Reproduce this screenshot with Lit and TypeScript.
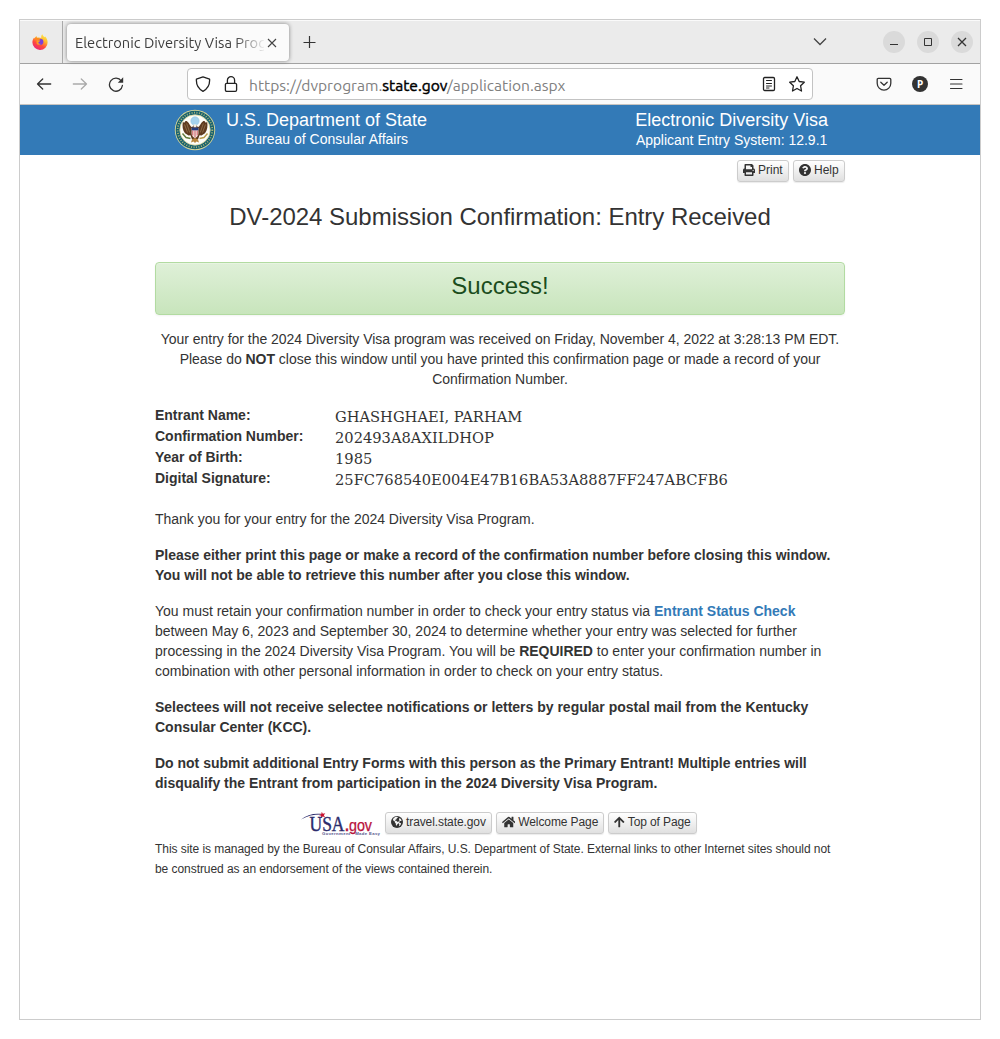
import { LitElement, html, css, svg } from "lit";
import { customElement } from "lit/decorators.js";

const firefox = html`<svg width="16" height="16" viewBox="0 0 16 16">
  <defs>
    <linearGradient id="fx" x1="0.8" y1="0" x2="0.25" y2="1">
      <stop offset="0" stop-color="#fff04a" /><stop offset=".35" stop-color="#ffb32c" />
      <stop offset=".65" stop-color="#ff4a3d" /><stop offset="1" stop-color="#e8207e" />
    </linearGradient>
  </defs>
  <path fill="url(#fx)" d="M10.4.3c.3 1.5 1.4 2.2 2.2 3 .3-.2.3-.7.3-1 1.700 1.500 2.700 3.700 2.700 6a7.600 7.600 0 0 1-15.200.2c0-2.200.7-3.700 1.800-5 .1.400.2.700.4.900C3 3.400 3.800 2.500 4.700 2c-.1.700.1 1.300.4 1.700 1.500-.5 3.200-.2 4.200.4-.3-1.400.1-2.900 1.100-3.800z" />
  <circle cx="8.300" cy="7.800" r="3.100" fill="#7a3fdb" />
  <path fill="#ff8a1f" d="M2.600 4.300c1.500-.9 3.300-.5 4.600.3l1.300.9-2 .5-1 1.300z" />
  <path fill="#ff9a22" d="M4.600 6.800c1.300-.8 2.500-.4 3.700-.1-.2.800-1.400 1-1.900 1.500-.2 1.300 1.300 2 2.800 1.600-1.300 1.500-4 1.300-4.600-.4z" />
</svg>`;

const seal = html`<svg width="42" height="42" viewBox="0 0 42 42">
  <circle cx="21" cy="21" r="20.200" fill="#d8d79a" />
  <circle cx="21" cy="21" r="19.300" fill="#17616f" />
  <circle cx="21" cy="21" r="17.300" fill="none" stroke="#a9b37a" stroke-width="1.800" stroke-dasharray="1 1.500" />
  <circle cx="21" cy="21" r="15.200" fill="#fdfdf8" stroke="#d5d294" stroke-width=".8" />
  <circle cx="21" cy="12" r="4.200" fill="#a5d3ee" stroke="#8dbede" stroke-width=".5" />
  <path fill="#5f3b20" d="M19 17c1-1.300 3-1.300 4 0l1 1.200c2-.6 2.300-4 4.800-5.700 1.300-.9 2.400-.1 2.500 1l1.900-.3c.7 3.600.2 8-2.200 11l-3.500 2.300-2-.3-1.500 4.300h-6l-1.500-4.300-2 .3-3.500-2.300c-2.400-3-2.900-7.400-2.200-11l1.900.3c.1-1.100 1.200-1.900 2.500-1 2.500 1.700 2.800 5.100 4.800 5.700z" />
  <path stroke="#a98b62" stroke-width=".6" fill="none" d="M10.500 15.500l3 8M12.700 14.500l3 9M31.500 15.500l-3 8M29.300 14.500l-3 9" />
  <path fill="#f5f2e6" d="M19.600 15.300h2.800v3.200h-2.800z" />
  <path fill="#f3ede4" d="M17.600 19h6.800v5.500c0 2.500-2 4-3.400 4.700-1.400-.7-3.400-2.200-3.400-4.700z" />
  <path fill="#253b7b" d="M17.600 18.500h6.800v2.900h-6.800z" />
  <path stroke="#c84250" stroke-width=".9" d="M18.800 21.500v5M21 21.500v7M23.200 21.500v5" />
  <path fill="none" stroke="#647c3e" stroke-width="1.500" d="M8.500 24.500l3.500 4 4.500 1" />
  <path fill="none" stroke="#b99b4d" stroke-width="1.400" d="M33.500 24.500l-3.500 4-4.500 1" />
  <path fill="#b8863d" d="M18 30.500l3-1.500 3 1.500 1 3-2.600-1-1.400 1.500-1.400-1.500-2.600 1z" />
</svg>`;

const usaGov = html`<svg class="usa" width="80" height="24" viewBox="0 0 80 24">
  <path fill="#2c2c6c" d="M0 7.500C5.500 3 12 1.200 19.500 1.800l2.500.8C14 2.300 7 3.500 0 7.500z" />
  <path fill="#c8102e" d="M20.800-.2l1 1.900 2.500-.5-1.500 2 1.300 2-2.300-.7-1.700 1.600V3.800l-2.300-.8 2.400-.8z" />
  <text class="u" x="8.500" y="19" textLength="35" lengthAdjust="spacingAndGlyphs">USA</text>
  <text class="g" x="44" y="19" textLength="27" lengthAdjust="spacingAndGlyphs"><tspan class="dot">.</tspan>gov</text>
  <text class="m" x="21" y="22.800" textLength="58">Government   Made Easy</text>
</svg>`;

const line = (size: number, body: unknown, w = 1.300) => html`<svg
  width=${size} height=${size} viewBox="0 0 16 16" fill="none" stroke="currentColor"
  stroke-width=${w} stroke-linecap="round" stroke-linejoin="round">${body}</svg>`;

const back = svg`<path d="M14.700 8H1.500M6.700 3L1.500 8l5.200 5"/>`;
const forward = svg`<path d="M1.300 8h13.200M9.300 3l5.200 5-5.200 5"/>`;
const reload = svg`<path d="M13.300 5A6.500 6.500 0 1 0 14.400 9.500"/><path fill="currentColor" stroke="none" d="M15.200 1.300v5.400H9.800z"/>`;
const shield = svg`<path d="M8 .9l6.600 2.300c.3 4.800-1 9.200-6.600 12.100C2.400 12.400 1.100 8 1.400 3.200z"/>`;
const lock = svg`<rect x="2.400" y="7.300" width="11.200" height="8" rx="1.300"/><path d="M4.400 7V4.300a3.600 3.600 0 0 1 7.200 0V7"/>`;
const reader = svg`<rect x="2.500" y="1.500" width="11" height="13" rx="1.200"/><path stroke-width="1" d="M5.500 4.500h5M5.500 7.500h5M5.500 10h5M5.500 12h2.500"/>`;
const star = svg`<path d="M8 .8l2.200 4.700 5.100.7-3.700 3.600.9 5.200L8 12.500 3.500 15l.9-5.200L.7 6.200l5.100-.7z"/>`;
const pocket = svg`<path d="M2.300 2.400h11.400c.7 0 1.100.4 1.100 1.100V7.300a6.800 6.800 0 0 1-13.600 0V3.500c0-.7.4-1.100 1.100-1.100z"/><path d="M4.800 6.300L8 9.300l3.200-3"/>`;
const menu = svg`<path d="M2.500 3.500h11.500M2.500 8h11.500M2.500 12.500h11.500"/>`;

const fa = (w: number, h: number, box: string, d: string) => html`<svg class="fa" width=${w} height=${h} viewBox=${box}><path fill="currentColor" fill-rule="evenodd" d=${d} /></svg>`;
const printIcon = fa(12, 12, "0 0 512 512", "M448 192V77.250c0-8.490-3.370-16.620-9.370-22.630L393.370 9.370c-6-6-14.140-9.370-22.630-9.370H96C78.330 0 64 14.330 64 32v160c-35.350 0-64 28.650-64 64v112c0 8.840 7.160 16 16 16h48v96c0 17.670 14.330 32 32 32h320c17.670 0 32-14.330 32-32v-96h48c8.840 0 16-7.160 16-16V256c0-35.350-28.650-64-64-64zm-64 256H128v-96h256v96zm0-224H128V64h192v48c0 8.840 7.160 16 16 16h48v96zm48 72c-13.250 0-24-10.750-24-24 0-13.260 10.750-24 24-24s24 10.740 24 24c0 13.250-10.750 24-24 24z");
const helpIcon = fa(12, 12, "8 8 496 496", "M504 256c0 136.997-111.043 248-248 248S8 392.997 8 256C8 119.083 119.043 8 256 8s248 111.083 248 248zM262.655 90c-54.497 0-89.255 22.957-116.549 63.758-3.536 5.286-2.353 12.415 2.715 16.258l34.699 26.310c5.205 3.947 12.621 3.008 16.665-2.122 17.864-22.658 30.113-35.797 57.303-35.797 20.429 0 45.698 13.148 45.698 32.958 0 14.976-12.363 22.667-32.534 33.976C247.128 238.528 216 254.941 216 296v4c0 6.627 5.373 12 12 12h56c6.627 0 12-5.373 12-12v-1.333c0-28.462 83.186-29.647 83.186-106.667 0-58.002-60.165-102-116.531-102zM256 338c-25.365 0-46 20.635-46 46 0 25.364 20.635 46 46 46s46-20.636 46-46c0-25.365-20.635-46-46-46z");
const homeIcon = fa(13.500, 12, "0 32 576 448", "M280.370 148.260L96 300.110V464a16 16 0 0 0 16 16l112.060-.290a16 16 0 0 0 15.920-16V368a16 16 0 0 1 16-16h64a16 16 0 0 1 16 16v95.640a16 16 0 0 0 16 16.050L464 480a16 16 0 0 0 16-16V300L295.670 148.260a12.190 12.190 0 0 0-15.300 0zM571.600 251.470L488 182.560V44.050a12 12 0 0 0-12-12h-56a12 12 0 0 0-12 12v72.610L318.470 43a48 48 0 0 0-61 0L4.340 251.470a12 12 0 0 0-1.600 16.900l25.500 31A12 12 0 0 0 45.150 301l235.220-193.740a12.190 12.190 0 0 1 15.300 0L530.900 301a12 12 0 0 0 16.900-1.600l25.500-31a12 12 0 0 0-1.700-16.930z");
const upIcon = fa(10.500, 12, "0 32 448 448", "M34.900 289.500l-22.200-22.200c-9.400-9.400-9.400-24.600 0-33.900L207 39c9.400-9.400 24.600-9.400 33.900 0l194.300 194.300c9.400 9.400 9.400 24.600 0 33.900L413 289.400c-9.500 9.500-25 9.300-34.300-.4L264 168.600V456c0 13.300-10.700 24-24 24h-32c-13.300 0-24-10.700-24-24V168.600L69.200 289.100c-9.300 9.800-24.800 10-34.300.4z");
const globeIcon = html`<svg class="fa" width="12" height="12" viewBox="0 0 12 12"><circle cx="6" cy="6" r="6" fill="currentColor" />
  <path fill="#f3f3f3" d="M5.300.8l1.600.2-.4 1-.9.200.2.900-1.300.6-.5 1 1.400.1.900.9 1.300.4-.2 1.300-1.100.9-.5 1.400-.9-.7-.1-1.500-1-.9.200-1.100-1.300-.6-.8-1.500C2.500 2 3.800 1.100 5.300.8zM8.400 2l1.400.9.900 1.700-1 .3-.9.100-.5 1 .4.900 1.100.2.200.8C9.200 9.400 8.500 10 7.800 10.300l.5-1.500-.3-1.100-.8-1.200.4-1.300 1-.7-.6-.9z" /></svg>`;

@customElement("app-root")
export class AppRoot extends LitElement {
  static styles = css`
    :host { display: block; background: #fff; font-family: "Liberation Sans", Arial, sans-serif; font-size: 14px; line-height: 20px; color: #333; }
    * { box-sizing: border-box; }
    svg { display: block; flex: none; }
    .page { height: 1039px; padding: 19px; overflow: hidden; }
    .window { width: 962px; height: 1001px; border: 1px solid #ccc; }
    .chrome { font-family: Ubuntu, "Noto Sans", sans-serif; }
    .tabs { height: 44px; display: flex; background: #ebebeb; border-top: 1px solid #fafafa; border-bottom: 1px solid #a2a2a2; color: #3d3d3d; }
    .pin { width: 43px; border-right: 1px solid #aaa; display: flex; align-items: center; justify-content: center; padding-right: 3px; }
    .tab { width: 222px; height: 37px; margin: 3px 0 0 4px; padding: 0 9px 0 8px; background: #fbfbfb; border-radius: 4px; box-shadow: 0 0 4px rgba(0,0,0,.45); display: flex; align-items: center; font-size: 14.670px; }
    .tabtext { width: 190px; overflow: hidden; white-space: nowrap; line-height: 22px; padding-top: 1px; -webkit-mask-image: linear-gradient(90deg, #000 160px, transparent 191px); }
    .tab svg, .tabs > svg { align-self: center; }
    .plus { margin-left: 13px; }
    .grow { flex: 1; }
    .down { margin-right: 56px; }
    .wins { display: flex; gap: 12px; align-items: center; padding-right: 7px; }
    .win { width: 22px; height: 22px; border-radius: 50%; background: #dadada; }
    .bar { height: 41px; display: flex; align-items: center; background: #fafafa; border-bottom: 1px solid #c8c4c0; padding-left: 16px; color: #333; }
    .nav { display: flex; gap: 20px; width: 151px; }
    .dim { opacity: .4; }
    .url { width: 626px; height: 32px; background: #fff; border: 1px solid #c3c3c3; border-radius: 4px; display: flex; align-items: center; padding: 0 7px; color: #222; }
    .url svg + svg { margin-left: 12px; }
    .addr { flex: 1; margin-left: 10px; padding-top: 1px; color: #808080; font-size: 15.600px; white-space: nowrap; }
    .host { color: #000; -webkit-text-stroke: .45px #000; }
    .tools { flex: 1; display: flex; justify-content: flex-end; gap: 20px; padding-right: 16px; }
    .p { font: bold 10px "Noto Sans", sans-serif; fill: #fff; }
    .banner { height: 50px; background: #337ab7; display: flex; justify-content: space-between; padding: 4px 152px 0 154px; color: #fff; }
    .brand { display: flex; gap: 10px; }
    .two { text-align: center; white-space: nowrap; }
    .big { font-size: 18px; line-height: 20px; padding-top: 1px; }
    .sub { line-height: 20px; }
    .brand .sub { line-height: 18px; }
    .content { width: 690px; margin: 0 auto; white-space: nowrap; letter-spacing: -.01px; }
    .actions { display: flex; gap: 4px; justify-content: flex-end; padding-top: 5px; }
    .btn { height: 22px; display: flex; align-items: center; gap: 3px; border: 1px solid #ccc; border-radius: 3px; padding: 0 5px 2px; background: linear-gradient(#fff, #e0e0e0); box-shadow: 0 1px 1px rgba(0,0,0,.08); font-size: 12px; color: #333; }
    .actions .wide { width: 52px; }
    .title { font-size: 24px; line-height: 26px; text-align: center; margin-top: 22px; letter-spacing: -.03px; }
    .alert { height: 53px; margin-top: 32px; border: 1px solid #b2dba1; border-radius: 4px; background: linear-gradient(#dff0d8, #c8e5bc); box-shadow: inset 0 1px 0 rgba(255,255,255,.25), 0 1px 2px rgba(0,0,0,.05); color: #1b4d1d; font-size: 24px; line-height: 26px; padding-top: 10px; text-align: center; }
    .intro { text-align: center; margin-top: 14px; letter-spacing: -.028px; }
    .facts { display: grid; grid-template-columns: 180px auto; grid-auto-rows: 21px; margin-top: 16px; }
    .value { font-family: "DejaVu Serif", serif; font-size: 14.670px; padding-top: 2px; letter-spacing: 0; }
    .para { margin-top: 16px; }
    .thanks { margin-top: 20px; }
    .link { color: #337ab7; font-weight: bold; }
    .foot { display: flex; gap: 4px; height: 22px; margin: 19px 0 0 146px; }
    .foot .btn { letter-spacing: -.1px; padding-bottom: 3px; }
    .note { font-size: 12px; margin-top: 5px; letter-spacing: -.057px; }
    .u { font: 20px "Liberation Serif", serif; fill: #2c2c6c; stroke: #2c2c6c; stroke-width: .4px; }
    .g { font: 17px "Liberation Sans", sans-serif; fill: #b8123c; stroke: #b8123c; stroke-width: .25px; }
    .dot { font-weight: bold; }
    .m { font: bold 4.300px "Liberation Sans", sans-serif; fill: #55558c; white-space: pre; }
  `;

  render() {
    return html`<div class="page"><div class="window">
      <div class="chrome">
        <div class="tabs">
          <div class="pin">${firefox}</div>
          <div class="tab"><div class="tabtext">Electronic Diversity Visa Program</div>
            <svg width="16" height="16" viewBox="0 0 16 16" stroke="#444" stroke-width="1.100"><path d="M4 4l8 8M12 4l-8 8" /></svg></div>
          <svg class="plus" width="16" height="16" viewBox="0 0 16 16" stroke="#333" stroke-width="1.200"><path d="M7.500 2v12M1.500 8.500h12" /></svg>
          <div class="grow"></div>
          <svg class="down" width="14" height="14" viewBox="0 0 14 14" fill="none" stroke="#444" stroke-width="1.300"><path d="M1 3.500l6 6 6-6" /></svg>
          <div class="wins">
            <svg class="win" viewBox="0 0 22 22" stroke="#333"><path d="M7 13.500h8" /></svg>
            <svg class="win" viewBox="0 0 22 22" stroke="#333" fill="none"><path d="M7.500 7.500h7v7h-7z" /></svg>
            <svg class="win" viewBox="0 0 22 22" stroke="#333" stroke-width="1.300"><path d="M7 7l8 8M15 7l-8 8" /></svg>
          </div>
        </div>
        <div class="bar">
          <div class="nav">${line(16, back)}<div class="dim">${line(16, forward)}</div>${line(16, reload)}</div>
          <div class="url">${line(16, shield)}${line(16, lock)}<div class="addr">https://dvprogram.<span class="host">state.gov</span>/application.aspx</div>${line(16, reader)}${line(16, star)}</div>
          <div class="tools">${line(16, pocket)}
            <svg width="16" height="16" viewBox="0 0 16 16"><circle cx="8" cy="8" r="8" fill="#333" /><text class="p" x="8" y="11.600" text-anchor="middle">P</text></svg>
            ${line(16, menu, 1.100)}</div>
        </div>
      </div>
      <div class="banner">
        <div class="brand">${seal}<div class="two"><div class="big">U.S. Department of State</div><div class="sub">Bureau of Consular Affairs</div></div></div>
        <div class="two"><div class="big">Electronic Diversity Visa</div><div class="sub">Applicant Entry System: 12.9.1</div></div>
      </div>
      <div class="content">
        <div class="actions"><div class="btn wide">${printIcon}Print</div><div class="btn wide">${helpIcon}Help</div></div>
        <div class="title">DV-2024 Submission Confirmation: Entry Received</div>
        <div class="alert">Success!</div>
        <div class="intro">Your entry for the 2024 Diversity Visa program was received on Friday, November 4, 2022 at 3:28:13 PM EDT.<br />Please do <b>NOT</b> close this window until you have printed this confirmation page or made a record of your<br />Confirmation Number.</div>
        <div class="facts">
          <b>Entrant Name:</b><div class="value">GHASHGHAEI, PARHAM</div>
          <b>Confirmation Number:</b><div class="value">202493A8AXILDHOP</div>
          <b>Year of Birth:</b><div class="value">1985</div>
          <b>Digital Signature:</b><div class="value">25FC768540E004E47B16BA53A8887FF247ABCFB6</div>
        </div>
        <div class="thanks">Thank you for your entry for the 2024 Diversity Visa Program.</div>
        <div class="para"><b>Please either print this page or make a record of the confirmation number before closing this window.<br />You will not be able to retrieve this number after you close this window.</b></div>
        <div class="para">You must retain your confirmation number in order to check your entry status via <span class="link">Entrant Status Check</span><br />between May 6, 2023 and September 30, 2024 to determine whether your entry was selected for further<br />processing in the 2024 Diversity Visa Program. You will be <b>REQUIRED</b> to enter your confirmation number in<br />combination with other personal information in order to check on your entry status.</div>
        <div class="para"><b>Selectees will not receive selectee notifications or letters by regular postal mail from the Kentucky<br />Consular Center (KCC).</b></div>
        <div class="para"><b>Do not submit additional Entry Forms with this person as the Primary Entrant! Multiple entries will<br />disqualify the Entrant from participation in the 2024 Diversity Visa Program.</b></div>
        <div class="foot">${usaGov}<div class="btn">${globeIcon}travel.state.gov</div><div class="btn">${homeIcon}Welcome Page</div><div class="btn">${upIcon}Top of Page</div></div>
        <div class="note">This site is managed by the Bureau of Consular Affairs, U.S. Department of State. External links to other Internet sites should not<br />be construed as an endorsement of the views contained therein.</div>
      </div>
    </div></div>`;
  }
}
